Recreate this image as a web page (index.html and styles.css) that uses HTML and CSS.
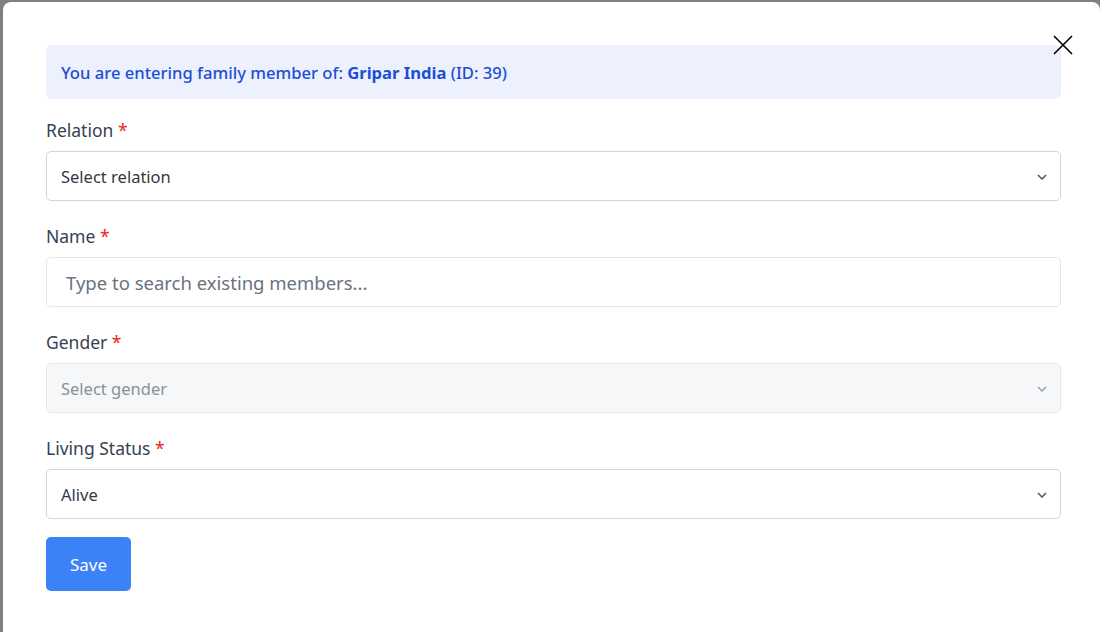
FILE: index.html
```html
<!DOCTYPE html>
<html>
<head>
<meta charset="utf-8">
<link rel="stylesheet" href="styles.css">
</head>
<body>
<div class="backdrop">
  <div class="modal">
    <button class="close" aria-label="Close">
      <svg width="20" height="20" viewBox="0 0 20 20"><path d="M1 1 L19 19 M19 1 L1 19" stroke="#000" stroke-width="1.6" fill="none"/></svg>
    </button>
    <div class="notice"><span>You are entering family member of: <strong>Gripar India</strong> (ID: 39)</span></div>
    <div class="field">
      <label class="label">Relation <span class="req">*</span></label>
      <div class="select"><span>Select relation</span><svg class="chev" width="10" height="6" viewBox="0 0 10 6"><path d="M1 1 L5 5 L9 1" stroke="#4b5563" stroke-width="1.5" fill="none"/></svg></div>
    </div>
    <div class="field">
      <label class="label">Name <span class="req">*</span></label>
      <div class="input"><span class="placeholder">Type to search existing members...</span></div>
    </div>
    <div class="field">
      <label class="label">Gender <span class="req">*</span></label>
      <div class="select disabled"><span>Select gender</span><svg class="chev" width="10" height="6" viewBox="0 0 10 6"><path d="M1 1 L5 5 L9 1" stroke="#9ca3af" stroke-width="1.5" fill="none"/></svg></div>
    </div>
    <div class="field last">
      <label class="label">Living Status <span class="req">*</span></label>
      <div class="select"><span>Alive</span><svg class="chev" width="10" height="6" viewBox="0 0 10 6"><path d="M1 1 L5 5 L9 1" stroke="#4b5563" stroke-width="1.5" fill="none"/></svg></div>
    </div>
    <button class="save">Save</button>
  </div>
</div>
</body>
</html>
```
FILE: styles.css
```css
html, body {
  margin: 0;
  padding: 0;
  height: 100%;
  overflow: hidden;
}
body {
  background: #808080;
  font-family: "Noto Sans", "Open Sans", sans-serif;
}
.backdrop {
  padding: 2px 0 0 3px;
}
.modal {
  position: relative;
  background: #fff;
  border-radius: 8px 8px 0 8px;
  height: 640px;
  padding: 43px 39px 0 43px;
  box-sizing: border-box;
}
.close {
  position: absolute;
  top: 33px;
  right: 27px;
  background: none;
  border: 0;
  padding: 0;
  width: 20px;
  height: 20px;
  cursor: pointer;
}
.close svg { display: block; }
.notice {
  background: #ecf1fd;
  border-radius: 6px;
  height: 54px;
  box-sizing: border-box;
  padding: 0 15px;
  display: flex;
  align-items: center;
  color: #1d4ed8;
  font-size: 16.6px;
  font-weight: 500;
  margin-bottom: 20px;
}
.notice strong { font-weight: 700; }
.field {
  display: flex;
  flex-direction: column;
  margin-bottom: 24px;
}
.field.last { margin-bottom: 18px; }
.label {
  font-size: 17.5px;
  line-height: 22px;
  color: #374151;
  margin-bottom: 10px;
}
.req { color: #ef1c1c; }
.select, .input {
  height: 50px;
  box-sizing: border-box;
  border: 1px solid #d1d5db;
  border-radius: 5px;
  display: flex;
  align-items: center;
  justify-content: space-between;
  padding: 0 13px 0 14px;
  font-size: 16.5px;
  color: #333a44;
  background: #fff;
}
.select.disabled {
  background: #f6f7f9;
  border-color: #e5e7eb;
  color: #8a9099;
}
.chev { display: block; margin-top: 1px; }
.input {
  border-color: #e2e6ea;
  padding-left: 19px;
  font-size: 18.5px;
}
.placeholder { color: #6b7280; }
.save {
  background: #3b82f6;
  color: #fff;
  border: 0;
  border-radius: 5px;
  width: 85px;
  height: 54px;
  font-family: inherit;
  font-size: 17px;
  cursor: pointer;
}
```
